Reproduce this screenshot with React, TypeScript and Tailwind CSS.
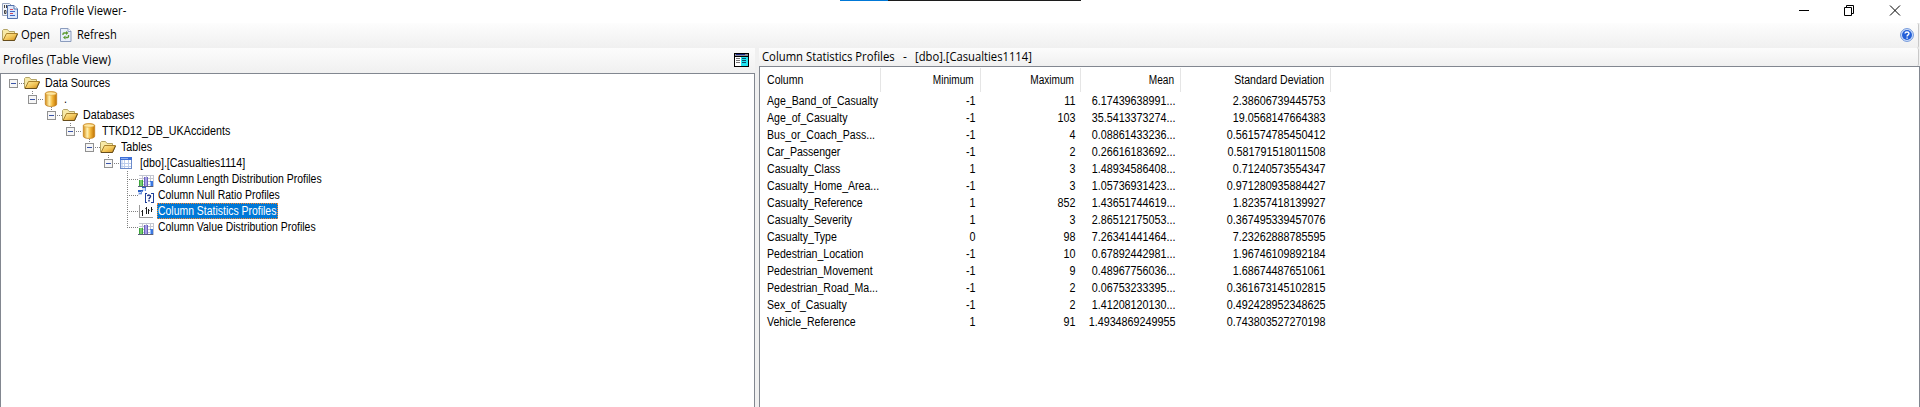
import type { ReactNode } from "react";

type IconName = "folder" | "db" | "table" | "bars" | "nulls" | "stats";

type Node = { level: number; label: string; icon: IconName; leaf?: boolean; last?: boolean; selected?: boolean };

const nodes: Node[] = [
  { level: 0, label: "Data Sources", icon: "folder" },
  { level: 1, label: ".", icon: "db" },
  { level: 2, label: "Databases", icon: "folder" },
  { level: 3, label: "TTKD12_DB_UKAccidents", icon: "db" },
  { level: 4, label: "Tables", icon: "folder" },
  { level: 5, label: "[dbo].[Casualties1114]", icon: "table" },
  { level: 6, label: "Column Length Distribution Profiles", icon: "bars", leaf: true },
  { level: 6, label: "Column Null Ratio Profiles", icon: "nulls", leaf: true },
  { level: 6, label: "Column Statistics Profiles", icon: "stats", leaf: true, selected: true },
  { level: 6, label: "Column Value Distribution Profiles", icon: "bars", leaf: true, last: true },
];

const indents = ["pl-[8px]", "pl-[27px]", "pl-[46px]", "pl-[65px]", "pl-[84px]", "pl-[103px]", "pl-[122px]"];

const rows: string[][] = [
  ["Age_Band_of_Casualty", "-1", "11", "6.17439638991...", "2.38606739445753"],
  ["Age_of_Casualty", "-1", "103", "35.5413373274...", "19.0568147664383"],
  ["Bus_or_Coach_Pass...", "-1", "4", "0.08861433236...", "0.561574785450412"],
  ["Car_Passenger", "-1", "2", "0.26616183692...", "0.581791518011508"],
  ["Casualty_Class", "1", "3", "1.48934586408...", "0.71240573554347"],
  ["Casualty_Home_Area...", "-1", "3", "1.05736931423...", "0.971280935884427"],
  ["Casualty_Reference", "1", "852", "1.43651744619...", "1.82357418139927"],
  ["Casualty_Severity", "1", "3", "2.86512175053...", "0.367495339457076"],
  ["Casualty_Type", "0", "98", "7.26341441464...", "7.23262888785595"],
  ["Pedestrian_Location", "-1", "10", "0.67892442981...", "1.96746109892184"],
  ["Pedestrian_Movement", "-1", "9", "0.48967756036...", "1.68674487651061"],
  ["Pedestrian_Road_Ma...", "-1", "2", "0.06753233395...", "0.361673145102815"],
  ["Sex_of_Casualty", "-1", "2", "1.41208120130...", "0.492428952348625"],
  ["Vehicle_Reference", "1", "91", "1.4934869249955", "0.743803527270198"],
];

const gridCols = "grid grid-cols-[120px_100px_100px_100px_150px]";

function FolderIcon() {
  return (
    <svg width="16" height="16" viewBox="0 0 16 16" className="shrink-0">
      <defs>
        <linearGradient id="folderFront" x1="0" y1="0" x2="1" y2="1">
          <stop offset="0" stopColor="#ffeda0" />
          <stop offset="0.5" stopColor="#f3c85c" />
          <stop offset="1" stopColor="#d08a14" />
        </linearGradient>
      </defs>
      <path d="M.5 13V3.500l1-1h4l1.500 2h5.500v3H5L1.500 13z" fill="#f7e9a6" stroke="#b3a468" />
      <path d="M1 13.500 4.500 6.500H15.500L12.500 13.500z" fill="url(#folderFront)" stroke="#a8802c" />
      <path d="M1 13.500H12.500L15.500 7" fill="none" stroke="#5f471c" strokeWidth="0.900" />
    </svg>
  );
}

function DbIcon() {
  return (
    <svg width="16" height="16" viewBox="0 0 16 16" className="shrink-0">
      <defs>
        <linearGradient id="dbBody">
          <stop offset="0" stopColor="#d48b10" />
          <stop offset="0.350" stopColor="#fff0b0" />
          <stop offset="0.600" stopColor="#f6bb3e" />
          <stop offset="1" stopColor="#bd6f00" />
        </linearGradient>
      </defs>
      <path d="M2.300 2.500C2.300 0 13.700 0 13.700 2.500V13.200C13.700 16.200 2.300 16.200 2.300 13.200z" fill="url(#dbBody)" stroke="#c58422" strokeWidth="0.800" />
      <ellipse cx="8" cy="2.600" rx="5.100" ry="1.700" fill="#ffe7a0" stroke="#dca43c" strokeWidth="0.600" />
    </svg>
  );
}

function TableIcon() {
  return (
    <svg width="16" height="16" viewBox="0 0 16 16" className="shrink-0" shapeRendering="crispEdges">
      <path d="M1 2h12v12H1z" fill="#fff" />
      <path d="M1 5h3v9H1z" fill="#d5e2f8" />
      <path d="M2 8.500h10M2 11.500h10M5.500 5v9M9.500 5v9" stroke="#bccdec" />
      <path d="M1.500 3v10.500h11V3" fill="none" stroke="#6c8bca" />
      <path d="M1 2h12v3H1z" fill="#3d6fd8" />
      <path d="M2 3h7v1H2z" fill="#8fb0f2" />
    </svg>
  );
}

function BarsIcon() {
  return (
    <svg width="16" height="16" viewBox="0 0 16 16" className="shrink-0" shapeRendering="crispEdges">
      <path d="M1 4h15v12H1z" fill="#fff" />
      <path d="M1 4.500h15M1 7.500h15M1 10.500h15M1 13.500h15M4.500 4v12M8.500 4v12M12.500 4v12M15.500 4v12" stroke="#c3c6d0" />
      <path d="M1 9h4v6H1z" fill="#3da23d" />
      <path d="M2 9h2v6H2z" fill="#79cf6e" />
      <path d="M6 6h4v9H6z" fill="#6a60bc" />
      <path d="M7 6h2v9H7z" fill="#a69fe4" />
      <path d="M12 10h3v5h-3z" fill="#3d78e0" />
      <path d="M12 11h1v4h-1z" fill="#8ebcff" />
      <path d="M0 15h15v1H0z" fill="#5a5f78" />
    </svg>
  );
}

function NullsIcon() {
  return (
    <svg width="16" height="16" viewBox="0 0 16 16" className="shrink-0">
      <g shapeRendering="crispEdges">
        <path d="M4 0h4v4H4zM0 4h4v4H0z" fill="#cfdcf5" />
        <path d="M4 0h4v1H4zM0 3h5v2H0z" fill="#285ec4" />
        <path d="M7 1h1v3H5v1H4V7H1V6h2V4h4z" fill="#6b8fda" />
        <path d="M9 6.500H7.500v9H9M13 6.500h2v9h-2" fill="none" stroke="#1e3f99" />
      </g>
      <path d="M9.500 9.200C9.700 7.600 12.700 7.700 12.500 9.500 12.400 10.700 11 10.700 11 12.200M11 13.100v1.400" fill="none" stroke="#1b2f83" strokeWidth="1.400" />
    </svg>
  );
}

function StatsIcon() {
  return (
    <svg width="16" height="16" viewBox="0 0 16 16" className="shrink-0" shapeRendering="crispEdges">
      <path d="M1.500 2v12.500H15" fill="none" stroke="#9a9a9a" />
      <path d="M4.500 7v6M8.500 4v7M10.500 6v5M13.500 4v5" stroke="#1b1b1b" />
      <path d="M3 8.500h1M7 5.500h1M11 7.500h1M14 6.500h1" stroke="#777" />
    </svg>
  );
}

function NodeIcon({ name }: { name: IconName }) {
  if (name === "folder") return <FolderIcon />;
  if (name === "db") return <DbIcon />;
  if (name === "table") return <TableIcon />;
  if (name === "bars") return <BarsIcon />;
  if (name === "nulls") return <NullsIcon />;
  return <StatsIcon />;
}

function Gutter({ node }: { node: Node }) {
  const bottom = node.leaf && !node.last ? 16 : 8;
  return (
    <svg width="15" height="16" viewBox="0 0 15 16" className="shrink-0" shapeRendering="crispEdges">
      {node.level > 0 && <path d={`M4.500 0V${bottom}`} stroke="#808080" strokeDasharray="1 1" />}
      <path d="M4 8.500H15" stroke="#808080" strokeDasharray="1 1" />
      {!node.leaf && (
        <>
          <rect x="0.500" y="4.500" width="8" height="8" fill="#f6f6f6" stroke="#919191" />
          <path d="M2 8.500h5" stroke="#3a54a8" />
        </>
      )}
    </svg>
  );
}

function TreeRow({ node }: { node: Node }) {
  return (
    <div className={`flex h-[16px] items-center ${indents[node.level]}`}>
      <Gutter node={node} />
      <NodeIcon name={node.icon} />
      {node.selected ? (
        <div className="ml-[3px] h-[16px] w-[121px] border border-dotted border-[#ff8728] bg-[#0078d7] text-white">
          <span className="block origin-left scale-x-[0.87] leading-[14px] whitespace-nowrap">{node.label}</span>
        </div>
      ) : (
        <span
          className={`inline-block origin-left leading-[16px] whitespace-nowrap ${node.leaf ? "ml-[4px] scale-x-[0.87]" : "ml-[5px] scale-x-[0.895]"}`}
        >
          {node.label}
        </span>
      )}
    </div>
  );
}

function UiText({ children, className }: { children: ReactNode; className: string }) {
  return (
    <span className={`inline-block origin-left font-['Open_Sans','Noto_Sans',sans-serif] text-[12px] leading-[16px] whitespace-pre ${className}`}>
      {children}
    </span>
  );
}

function TitleBar() {
  return (
    <header className="flex h-[23px] shrink-0 bg-white">
      <svg width="16" height="16" viewBox="0 0 16 16" className="mt-[3px] ml-[2px] shrink-0">
        <path d="M.5.500h7l2 2v10H.500z" fill="#f2f4f8" stroke="#97a5c0" />
        <path d="M2.500 2v3M4.500 2v3M2.500 7.500h1.500v3H2.500z" fill="none" stroke="#444" />
        <path d="M5.500 2.500h6.500l3.500 3.500v9.500h-10z" fill="#dce8fb" stroke="#5572ac" />
        <path d="M12 2.500v3.500h3.500" fill="#fff" stroke="#5572ac" />
        <path d="M8 6.500h3M8 10.500h3" stroke="#d34b5e" />
        <path d="M8 8.500h5M8 12.500h5" stroke="#3d66c7" />
      </svg>
      <UiText className="mt-[3px] ml-[5px] scale-x-[0.935]">Data Profile Viewer-</UiText>
      <div className="ml-auto flex pt-[5px] pr-[19px]">
        <svg width="102" height="11" viewBox="0 0 102 11" fill="none" stroke="#000">
          <path d="M0 5.500h10" />
          <path d="M45.500 2.500h7v8h-7zM47.500 2.500v-2h7v8h-2" />
          <path d="M91 .5l10 10M101 .5l-10 10" />
        </svg>
      </div>
      <div className="absolute top-0 left-[840px] flex h-px w-[241px]">
        <div className="w-[48px] bg-[#0078d7]" />
        <div className="flex-1 bg-[#1c1c1c]" />
      </div>
    </header>
  );
}

function Toolbar() {
  return (
    <div className="mr-px flex h-[25px] shrink-0 items-center rounded-r-[2px] border-r border-[#c8c8c8] bg-linear-to-b from-[#fdfdfd] to-[#f0f0f0] pb-px">
      <div className="ml-[2px] flex w-[58px] items-center">
        <FolderIcon />
        <UiText className="ml-[3px] scale-x-[0.94]">Open</UiText>
      </div>
      <svg width="12" height="14" viewBox="0 0 12 14" className="shrink-0">
        <path d="M.5.500H8l3 3v10H.500z" fill="#e9effb" stroke="#8b9cbd" />
        <path d="M8 .5v3h3" fill="#fff" stroke="#8b9cbd" />
        <path d="M3 7V6Q3 5 4 5H6M8.500 7v1.500q0 1-1 1H5.500" fill="none" stroke="#5b9a2e" strokeWidth="1.300" />
        <path d="M6 3v4l2.500-2zM5.500 7.500v4L3 9.500z" fill="#5b9a2e" />
      </svg>
      <UiText className="ml-[5px] scale-x-[0.925]">Refresh</UiText>
      <svg width="14" height="14" viewBox="0 0 14 14" className="mr-[4px] ml-auto shrink-0">
        <circle cx="7" cy="7" r="6.400" fill="#d7e6ff" stroke="#6c93d8" />
        <circle cx="7" cy="7" r="5" fill="#2460d8" />
        <path d="M5 5.500C5.200 3.400 9 3.600 9 5.600 9 6.900 7.100 6.900 7.100 8.400M7.100 9.400v1.400" fill="none" stroke="#fff" strokeWidth="1.400" />
      </svg>
    </div>
  );
}

function PaneIcon() {
  return (
    <svg width="15" height="14" viewBox="0 0 15 14" className="mt-[5px] mr-[6px] ml-auto shrink-0" shapeRendering="crispEdges">
      <path d="M0 0h15v14H0z" fill="#000" />
      <path d="M1 1h13v2H1z" fill="#8d8d99" />
      <path d="M2 1h9v1H2z" fill="#1c2a8a" />
      <path d="M1 4h6v9H1z" fill="#fff" />
      <path d="M7 4h7v9H7z" fill="#22e6f2" />
      <path d="M2 5.500h4M2 7.500h4M2 9.500h4" stroke="#777" />
      <path d="M8 5.500h4M8 7.500h4M8 9.500h4" stroke="#0a4c6c" />
    </svg>
  );
}

function HeaderCell({ children, first, narrow }: { children: ReactNode; first?: boolean; narrow?: boolean }) {
  return (
    <div className={`border-r border-[#e5e5e5] leading-[24px] ${first ? "pl-[6px] text-left" : "pr-[6px] text-right"}`}>
      <span className={`inline-block ${narrow ? "scale-x-[0.84]" : "scale-x-[0.88]"} ${first ? "origin-left" : "origin-right"}`}>{children}</span>
    </div>
  );
}

export default function App() {
  return (
    <div className="relative flex h-[407px] w-[1920px] flex-col overflow-hidden bg-[#f0f0f0] font-['Liberation_Sans',Arial,sans-serif] text-[12px] text-black">
      <TitleBar />
      <Toolbar />
      <main className="flex min-h-0 flex-1">
        <section className="flex w-[755px] flex-col">
          <div className="flex h-[25px] shrink-0 bg-linear-to-b from-[#fcfcfc] to-[#f0f0f0]">
            <UiText className="mt-[4px] ml-[3px] scale-x-[0.965]">Profiles (Table View)</UiText>
            <PaneIcon />
          </div>
          <div className="flex-1 border border-b-0 border-[#828790] bg-white pt-px">
            {nodes.map((node) => (
              <TreeRow key={node.label} node={node} />
            ))}
          </div>
        </section>
        <div className="w-[4px]" />
        <section className="flex flex-1 flex-col">
          <div className="mr-px flex h-[18px] shrink-0 rounded-r-[2px] border-r border-[#c8c8c8] bg-linear-to-b from-[#fcfcfc] to-[#f0f0f0] pt-px pl-[3px]">
            <UiText className="w-[141px] scale-x-[0.94]">Column Statistics Profiles</UiText>
            <UiText className="w-[12px]">-</UiText>
            <UiText className="scale-x-[0.935]">[dbo].[Casualties1114]</UiText>
          </div>
          <div className="flex-1 border border-b-0 border-[#828790] bg-white pt-px pl-px">
            <div className={`${gridCols} mb-px h-[24px]`}>
              <HeaderCell first>Column</HeaderCell>
              <HeaderCell narrow>Minimum</HeaderCell>
              <HeaderCell narrow>Maximum</HeaderCell>
              <HeaderCell narrow>Mean</HeaderCell>
              <HeaderCell>Standard Deviation</HeaderCell>
            </div>
            {rows.map((row) => (
              <div key={row[0]} className={`${gridCols} h-[17px] leading-[17px] whitespace-nowrap`}>
                {row.map((cell, i) =>
                  i === 0 ? (
                    <span key={i} className="origin-left translate-x-[6px] scale-x-[0.88]">{cell}</span>
                  ) : (
                    <span key={i} className="origin-right translate-x-[-5.5px] scale-x-[0.897] text-right">{cell}</span>
                  ),
                )}
              </div>
            ))}
          </div>
        </section>
      </main>
    </div>
  );
}
